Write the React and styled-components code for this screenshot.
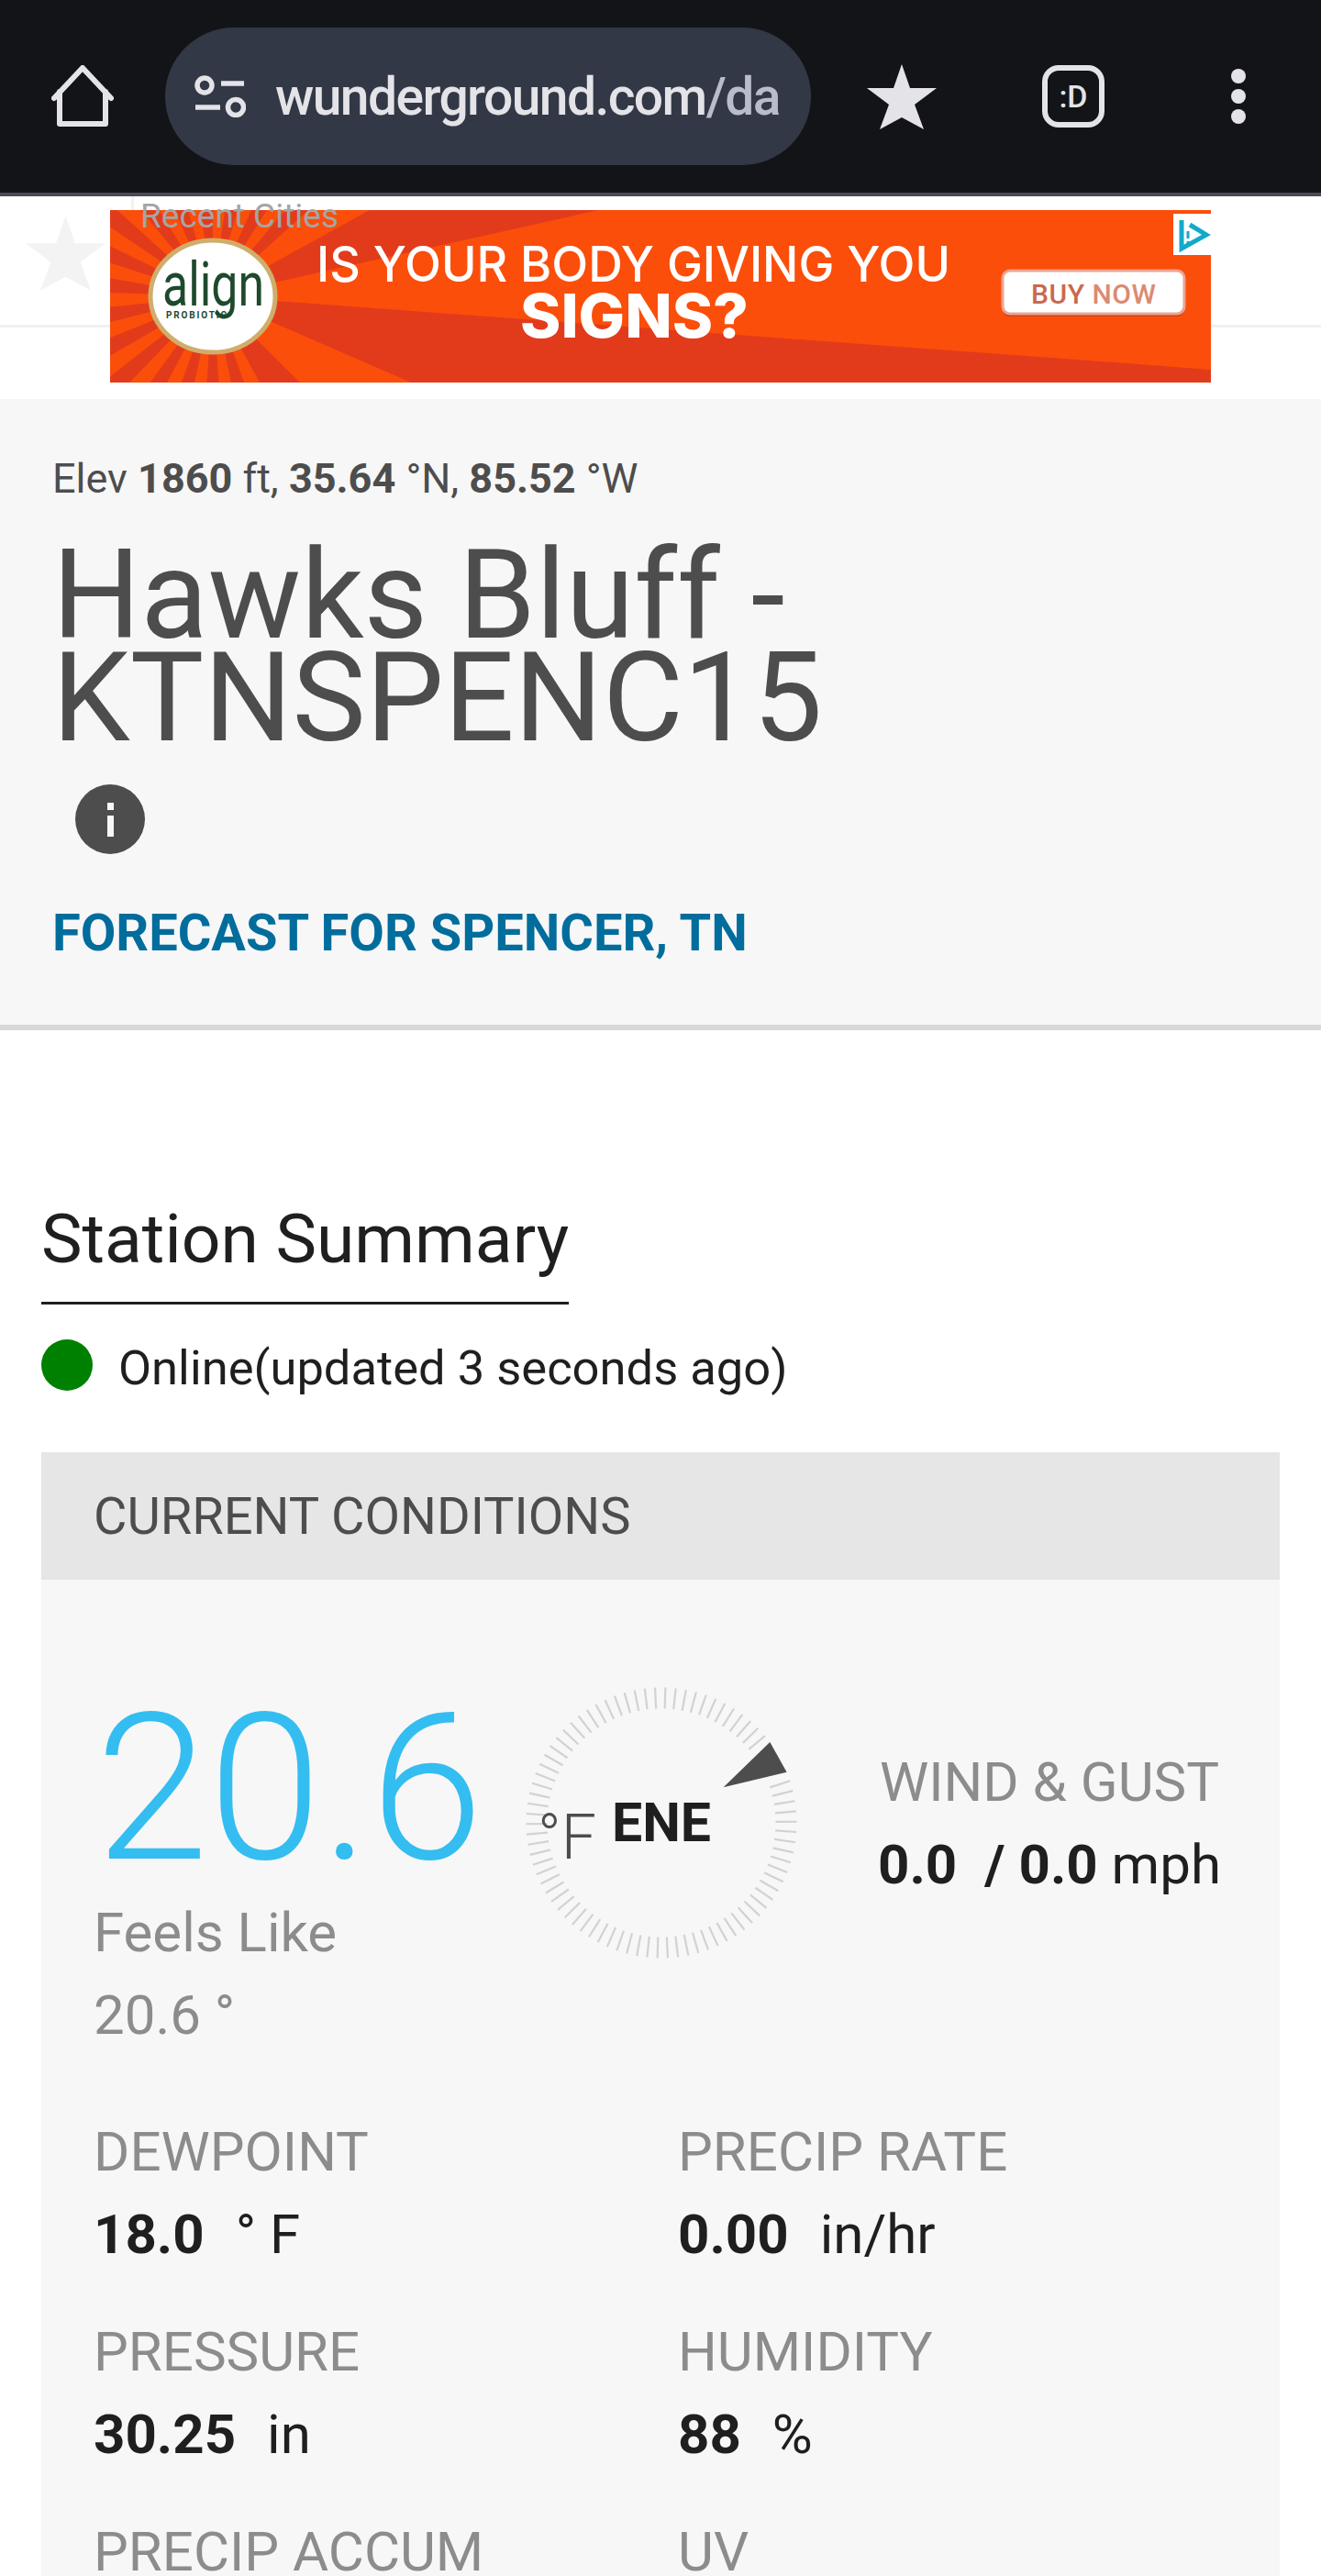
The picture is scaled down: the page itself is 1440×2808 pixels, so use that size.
import React from 'react';
import styled, { createGlobalStyle } from 'styled-components';

const GlobalStyle = createGlobalStyle`
  html, body { margin: 0; padding: 0; background: #fff; }
  body { font-family: Roboto, "Liberation Sans", sans-serif; width: 1440px; height: 2808px; overflow: hidden; }
  * { box-sizing: border-box; }
`;

const Page = styled.div`
  width: 1440px;
  height: 2808px;
  overflow: hidden;
  background: #fff;
`;

const BrowserBar = styled.div`
  height: 214px;
  background: #131417;
  border-bottom: 4px solid #4a4b55;
  display: flex;
  align-items: center;
  padding-left: 56px;
`;

const UrlPill = styled.div`
  width: 704px;
  height: 150px;
  margin-left: 56px;
  margin-right: 61px;
  border-radius: 75px;
  background: #333846;
  display: flex;
  align-items: center;
  padding-left: 32px;
  font-size: 57px;
  font-weight: 500;
  letter-spacing: -1.6px;
  color: #e3e3e8;
  overflow: hidden;
  white-space: nowrap;
`;

const UrlFade = styled.span`
  color: #b9bdc9;
`;

const BarIcon = styled.svg`
  flex: none;
  display: block;
  margin-right: ${p => p.$gap || 0}px;
`;

const AdStrip = styled.div`
  position: relative;
  height: 221px;
  background: #fff;
  display: flex;
  justify-content: center;
  padding-top: 15px;
`;

const StripLine = styled.div`
  position: absolute;
  left: 0;
  right: 0;
  top: 140px;
  height: 3px;
  background: #f1f1f1;
`;

const StripDivider = styled.div`
  position: absolute;
  left: 143px;
  top: 0;
  width: 3px;
  height: 15px;
  background: #f1f1f1;
`;

const FadedStar = styled.svg`
  position: absolute;
  left: 28px;
  top: 21px;
`;

const RecentCities = styled.div`
  position: absolute;
  left: 153px;
  top: 0;
  font-size: 37px;
  line-height: 44px;
  color: #a5a5a5;
  z-index: 2;
`;

const AdBanner = styled.svg`
  position: relative;
  display: block;
  width: 1200px;
  height: 188px;
`;

const StationHeader = styled.section`
  height: 688px;
  background: #f7f7f7;
  border-bottom: 6px solid #d8d8d8;
  padding: 60px 57px 0;
  color: #4d4d4d;
`;

const Coords = styled.div`
  font-size: 45px;
  line-height: 54px;
  b { font-weight: 700; }
`;

const StationName = styled.h1`
  margin: 44px 0 0 0;
  font-size: 135px;
  line-height: 112px;
  font-weight: 400;
  color: #4d4d4d;
`;

const InfoBadge = styled.div`
  width: 76px;
  height: 76px;
  margin: 38px 0 0 25px;
  border-radius: 50%;
  background: #4d4d4d;
  display: flex;
  flex-direction: column;
  align-items: center;
  justify-content: center;
  gap: 6px;
`;

const InfoDot = styled.span`
  width: 7px;
  height: ${p => p.$h}px;
  background: #f7f7f7;
`;

const ForecastLink = styled.div`
  margin-top: 54px;
  font-size: 56px;
  line-height: 64px;
  font-weight: 700;
  color: #006d9c;
`;

const Summary = styled.section`
  padding: 185px 45px 0;
`;

const SummaryTitle = styled.h2`
  display: inline-block;
  margin: 0;
  font-size: 75px;
  line-height: 84px;
  font-weight: 400;
  color: #1f1f1f;
  padding-bottom: 27px;
  border-bottom: 3px solid #1f1f1f;
`;

const OnlineRow = styled.div`
  display: flex;
  align-items: flex-start;
  gap: 28px;
  margin-top: 38px;
  font-size: 52.5px;
  line-height: 58px;
  color: #1f1f1f;
`;

const OnlineText = styled.span`
  padding-top: 2px;
`;

const StatusDot = styled.span`
  width: 56px;
  height: 56px;
  border-radius: 50%;
  background: #008000;
`;

const ConditionsCard = styled.div`
  margin-top: 63px;
  background: #f7f7f7;
`;

const CardTitle = styled.div`
  height: 139px;
  background: #e6e6e6;
  display: flex;
  align-items: center;
  padding-left: 57px;
  font-size: 56px;
  color: #4d4d4d;
`;

const TopRow = styled.div`
  position: relative;
  height: 589px;
  padding: 118px 57px 0;
`;

const Temperature = styled.div`
  font-size: 222px;
  line-height: 220px;
  font-weight: 300;
  color: #34bdf0;
  margin-left: 2px;
`;

const TempUnit = styled.span`
  position: absolute;
  left: 541px;
  top: 241px;
  font-size: 68px;
  line-height: 80px;
  font-weight: 300;
  color: #4d4d4d;
`;

const FeelsLabel = styled.div`
  margin-top: 2px;
  font-size: 60px;
  line-height: 90px;
  color: #8c8c8c;
`;

const Dial = styled.svg`
  position: absolute;
  left: 521px;
  top: 110px;
`;

const WindBlock = styled.div`
  position: absolute;
  left: 899px;
  top: 186px;
  width: 400px;
  text-align: center;
`;

const StatLabel = styled.div`
  font-size: 60px;
  line-height: 70px;
  color: #8c8c8c;
  white-space: nowrap;
`;

const StatValue = styled.div`
  margin-top: 20px;
  font-size: 60px;
  line-height: 70px;
  color: #1f1f1f;
  white-space: nowrap;
  b { font-weight: 700; }
`;

const StatGrid = styled.div`
  display: grid;
  grid-template-columns: 637px 1fr;
  row-gap: 58px;
  padding: 0 57px;
`;

const Unit = styled.span`
  margin-left: ${p => p.$gap}px;
`;

const stats = [
  { label: 'DEWPOINT', value: '18.0', unit: '° F' },
  { label: 'PRECIP RATE', value: '0.00', unit: 'in/hr' },
  { label: 'PRESSURE', value: '30.25', unit: 'in' },
  { label: 'HUMIDITY', value: '88', unit: '%' },
  { label: 'PRECIP ACCUM' },
  { label: 'UV' },
];

// dial ticks, the ones behind the pointer are left out
const ticks = Array.from({ length: 82 }, (_, i) => 1.7 + i * (360 / 82)).filter(a => a < 52 || a > 70);

const CompassDial = () => (
  <Dial width="310" height="310" viewBox="0 0 310 310">
    {ticks.map(a => (
      <line key={a} x1="155" y1="7.5" x2="155" y2="30.5" stroke="#d2d2d2" strokeWidth="2.2"
        transform={`rotate(${a} 155 155)`} />
    ))}
    <polygon points="273.3,67 291.6,99.7 222.6,116.3" fill="#4d4d4d" />
    <text x="155" y="175" textAnchor="middle" fontFamily="Roboto, sans-serif" fontSize="59" fontWeight="700" fill="#1f1f1f">ENE</text>
  </Dial>
);

// red wedges of the sunburst, in degrees round the logo
const redWedges = [[-28.8, -12.6], [4.2, 23.5], [44.7, 61.5]];
for (let a = 70; a < 325; a += 16) redWedges.push([a, a + 8]);

const polar = deg => {
  const r = (deg * Math.PI) / 180;
  return `${112 + 1600 * Math.cos(r)} ${94 + 1600 * Math.sin(r)}`;
};

const SunRays = () => (
  <path d={redWedges.map(([a, b]) => `M112 94 L${polar(a)} L${polar(b)} Z`).join(' ')} fill="#e23b1b" />
);

const App = () => (
  <Page>
    <GlobalStyle />
    <BrowserBar>
      <BarIcon width="68" height="68" viewBox="0 0 68 68" fill="none" stroke="#e3e3e8" strokeWidth="6" strokeLinejoin="round" strokeLinecap="round">
        <path d="M3 36 L34 3 L65 36 M9 29 V64 H59 V29" />
      </BarIcon>
      <UrlPill>
        <BarIcon $gap={32} width="56" height="46" viewBox="0 0 56 46" fill="none" stroke="#e3e3e8" strokeWidth="5.5">
          <circle cx="11" cy="11" r="8" />
          <path d="M29 9 H54 M1 35 H28" />
          <circle cx="45" cy="35" r="8.5" />
        </BarIcon>
        wunderground.com<UrlFade>/da</UrlFade>
      </UrlPill>
      <BarIcon $gap={115} width="76" height="71" viewBox="0 0 76 71">
        <path d="M38 0 L47 26 L76 26 L52 44 L62 71 L38 58 L14 71 L24 44 L0 26 L29 26 Z" fill="#e3e3e8" />
      </BarIcon>
      <BarIcon $gap={138} width="68" height="68" viewBox="0 0 68 68" fill="none">
        <rect x="3" y="3" width="62" height="62" rx="15" stroke="#e3e3e8" strokeWidth="6" />
        <text x="34" y="46" textAnchor="middle" fontFamily="Roboto, sans-serif" fontSize="34" fontWeight="500" fill="#e3e3e8">:D</text>
      </BarIcon>
      <BarIcon width="16" height="60" viewBox="0 0 16 60" fill="#e3e3e8">
        <circle cx="8" cy="8" r="8" />
        <circle cx="8" cy="30" r="8" />
        <circle cx="8" cy="52" r="8" />
      </BarIcon>
    </BrowserBar>

    <AdStrip>
      <StripLine />
      <StripDivider />
      <FadedStar width="87" height="82" viewBox="0 0 76 71">
        <path d="M38 0 L47 26 L76 26 L52 44 L62 71 L38 58 L14 71 L24 44 L0 26 L29 26 Z" fill="#f3f3f3" />
      </FadedStar>
      <AdBanner viewBox="0 0 1200 188">
        <clipPath id="adclip"><rect width="1200" height="188" /></clipPath>
        <rect width="1200" height="188" fill="#fb4e0b" />
        <g clipPath="url(#adclip)"><SunRays /></g>
        <ellipse cx="112" cy="94" rx="68" ry="61" fill="#fff" stroke="#cfae6c" strokeWidth="5" />
        <text x="57" y="104" fontFamily="Roboto, sans-serif" fontSize="66" fontWeight="400" fill="#1d4a2c" textLength="111" lengthAdjust="spacingAndGlyphs">align</text>
        <text x="61" y="118" fontFamily="Roboto, sans-serif" fontSize="10" fontWeight="700" fill="#1d4a2c" textLength="66">PROBIOTIC</text>
        <text x="225" y="78" fontFamily="Inter, sans-serif" fontSize="54" fontWeight="500" fill="#fff" textLength="691" lengthAdjust="spacingAndGlyphs">IS YOUR BODY GIVING YOU</text>
        <text x="447" y="139" fontFamily="Inter, sans-serif" fontSize="66" fontWeight="800" fill="#fff" textLength="249" lengthAdjust="spacingAndGlyphs">SIGNS?</text>
        <rect x="973" y="69" width="198" height="47" rx="8" fill="#c9401a" />
        <rect x="973" y="66" width="198" height="47" rx="8" fill="#fff" stroke="#e9a58f" strokeWidth="3" />
        <text x="1004" y="102" fontFamily="Roboto, sans-serif" fontSize="30" fontWeight="500" fill="#dc8a72" textLength="136">
          <tspan fill="#c9694d">BUY</tspan> NOW
        </text>
        <rect x="1159" y="4" width="41" height="45" fill="#fff" />
        <path d="M1168 11 V42 L1195 27 L1177 16" fill="none" stroke="#13a9c9" strokeWidth="5" />
        <path d="M1175 23 V31 M1175 34 V37" fill="none" stroke="#13a9c9" strokeWidth="3" />
      </AdBanner>
      <RecentCities>Recent Cities</RecentCities>
    </AdStrip>

    <StationHeader>
      <Coords>Elev <b>1860</b> ft, <b>35.64</b> °N, <b>85.52</b> °W</Coords>
      <StationName>Hawks Bluff -<br />KTNSPENC15</StationName>
      <InfoBadge>
        <InfoDot $h={8} />
        <InfoDot $h={23} />
      </InfoBadge>
      <ForecastLink>FORECAST FOR SPENCER, TN</ForecastLink>
    </StationHeader>

    <Summary>
      <SummaryTitle>Station Summary</SummaryTitle>
      <OnlineRow><StatusDot /><OnlineText>Online(updated 3 seconds ago)</OnlineText></OnlineRow>
      <ConditionsCard>
        <CardTitle>CURRENT CONDITIONS</CardTitle>
        <TopRow>
          <Temperature>20.6</Temperature>
          <FeelsLabel>Feels Like<br />20.6 °</FeelsLabel>
          <CompassDial />
          <TempUnit>°F</TempUnit>
          <WindBlock>
            <StatLabel>WIND &amp; GUST</StatLabel>
            <StatValue><b>0.0</b><Unit $gap={30}><b>/ 0.0</b></Unit> mph</StatValue>
          </WindBlock>
        </TopRow>
        <StatGrid>
          {stats.map(s => (
            <div key={s.label}>
              <StatLabel>{s.label}</StatLabel>
              {s.value && <StatValue><b>{s.value}</b><Unit $gap={34}>{s.unit}</Unit></StatValue>}
            </div>
          ))}
        </StatGrid>
      </ConditionsCard>
    </Summary>
  </Page>
);

export default App;
